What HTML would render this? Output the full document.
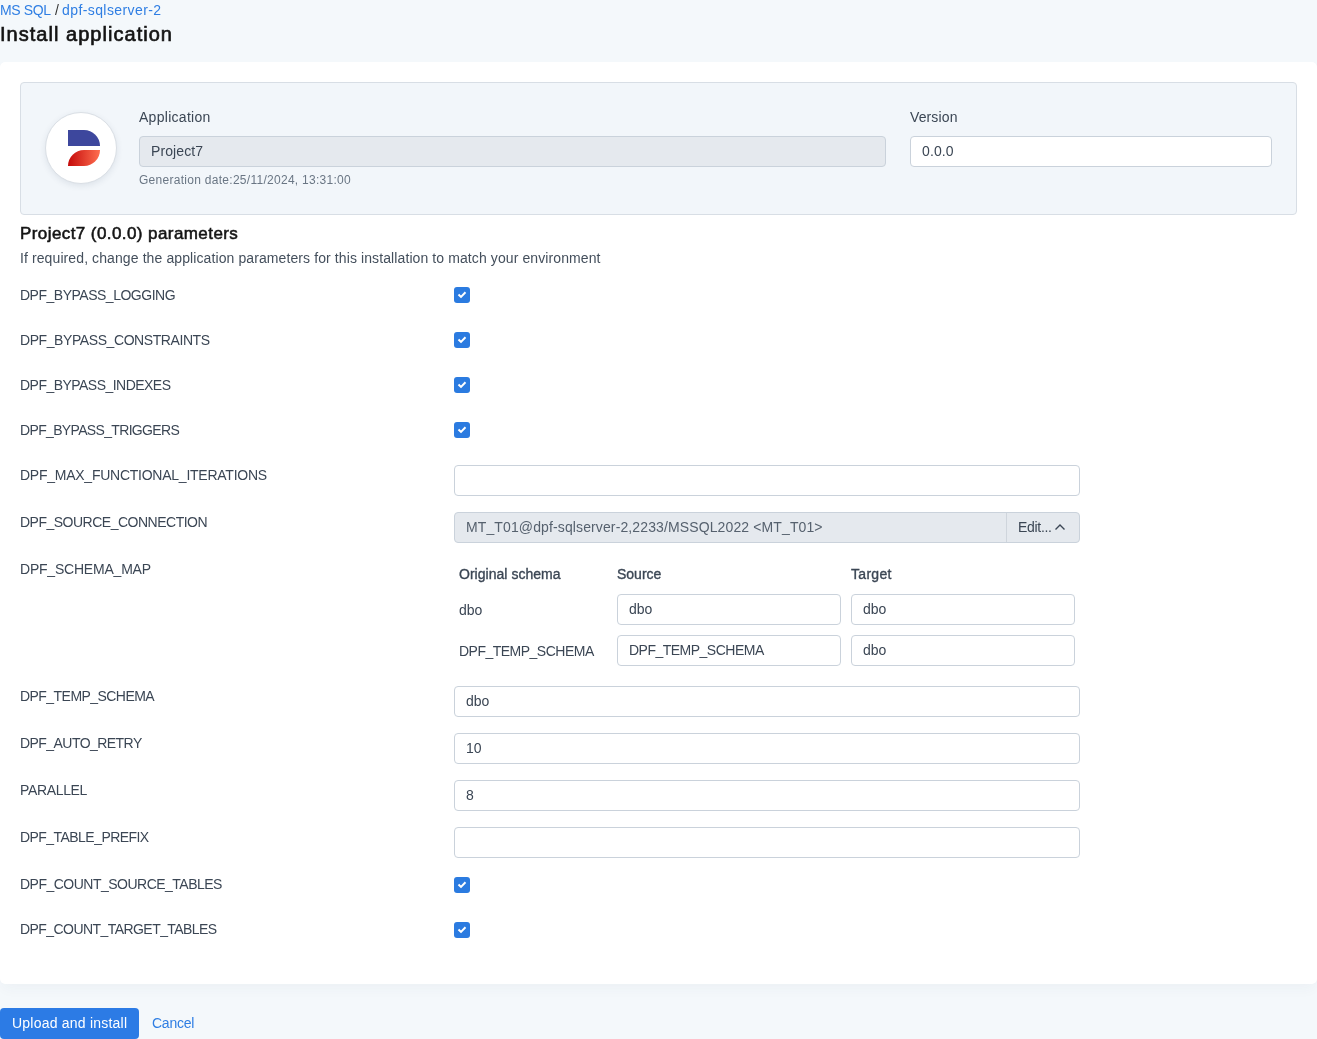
<!DOCTYPE html>
<html><head><meta charset="utf-8"><style>
*{box-sizing:border-box;margin:0;padding:0}
html,body{width:1317px;height:1039px;overflow:hidden;background:#f4f8fb}
body{font-family:"Liberation Sans",sans-serif;color:#3b4654}
#w{position:absolute;left:0;top:0;width:1317px;height:1039px;background:#f4f8fb;will-change:transform;overflow:hidden}
.a{position:absolute;white-space:nowrap;line-height:1}
.t14{font-size:14px}
.lbl{font-size:14px;color:#3b4654}
.sub{color:#444f5c}
.dtx{color:#56616e}
.head{color:#141414;-webkit-text-stroke:0.55px #141414}
.th{-webkit-text-stroke:0.35px #3b4654}
.card{position:absolute;left:0;top:62px;width:1317px;height:922px;background:#fff;border-radius:5px;box-shadow:0 0 1px rgba(40,60,90,.03),0 7px 14px -3px rgba(40,60,90,.045)}
.box{position:absolute;left:20px;top:82px;width:1277px;height:133px;background:#f2f6fa;border:1px solid #d8dee5;border-radius:4px}
.inp{position:absolute;height:31px;background:#fff;border:1px solid #cad2db;border-radius:4px}
.dis{background:#e5e9ee}
.cb{position:absolute;left:454px;width:16px;height:16px;background:#2b7be0;border-radius:3px}
.cb svg{position:absolute;left:0;top:0}
.link{color:#2f7ee3}
</style></head><body><div id="w">
<div class="a link" style="left:0;top:3px;font-size:14px;letter-spacing:-0.38px">MS SQL</div>
<div class="a" style="left:55px;top:3px;font-size:14px;color:#333">/</div>
<div class="a link" style="left:62px;top:3px;font-size:14px;letter-spacing:0.41px">dpf-sqlserver-2</div>
<div class="a head" style="left:0;top:24px;font-size:20px;-webkit-text-stroke:0.65px #141414;letter-spacing:1.03px">Install application</div>
<div class="card"></div><div class="box"></div>
<div class="a" style="left:45px;top:112px;width:72px;height:72px;border-radius:50%;background:#fff;border:1px solid #dadfe5;box-shadow:0 2px 6px rgba(40,60,90,.10)"></div>
<svg class="a" style="left:68px;top:129px" width="33" height="38" viewBox="0 0 33 38">
 <defs><linearGradient id="rg" x1="0" x2="1" y1="0" y2="0"><stop offset="0" stop-color="#c40a0a"/><stop offset="1" stop-color="#ff6f50"/></linearGradient></defs>
 <path d="M0 1 H16 A16 16 0 0 1 32 17 H0 Z" fill="#3d479d"/>
 <path d="M32 21 H16 A16 16 0 0 0 0 37 H16 A16 16 0 0 0 32 21 Z" fill="url(#rg)"/>
</svg>
<div class="a t14" style="left:139px;top:110px;letter-spacing:0.28px">Application</div>
<div class="inp dis" style="left:139px;top:136px;width:747px"></div><div class="a t14" style="left:151px;top:144px;letter-spacing:0.1px">Project7</div>
<div class="a" style="left:139px;top:174px;font-size:12px;color:#6a7684;letter-spacing:0.28px">Generation date:25/11/2024, 13:31:00</div>
<div class="a t14" style="left:910px;top:110px;letter-spacing:0.12px">Version</div>
<div class="inp " style="left:910px;top:136px;width:362px"></div><div class="a t14" style="left:922px;top:144px;letter-spacing:0.12px">0.0.0</div>
<div class="a head" style="left:20px;top:225px;font-size:17px;letter-spacing:0.42px">Project7 (0.0.0) parameters</div>
<div class="a t14 sub" style="left:20px;top:251px;letter-spacing:0.1px">If required, change the application parameters for this installation to match your environment</div>
<div class="a lbl" style="left:20px;top:288px;letter-spacing:-0.49px">DPF_BYPASS_LOGGING</div>
<div class="cb" style="top:287px"><svg width="16" height="16"><path d="M4.5 7.5 L7 9.9 L11.5 5.3" stroke="#fff" stroke-width="2" fill="none"/></svg></div>
<div class="a lbl" style="left:20px;top:333px;letter-spacing:-0.42px">DPF_BYPASS_CONSTRAINTS</div>
<div class="cb" style="top:332px"><svg width="16" height="16"><path d="M4.5 7.5 L7 9.9 L11.5 5.3" stroke="#fff" stroke-width="2" fill="none"/></svg></div>
<div class="a lbl" style="left:20px;top:378px;letter-spacing:-0.53px">DPF_BYPASS_INDEXES</div>
<div class="cb" style="top:377px"><svg width="16" height="16"><path d="M4.5 7.5 L7 9.9 L11.5 5.3" stroke="#fff" stroke-width="2" fill="none"/></svg></div>
<div class="a lbl" style="left:20px;top:423px;letter-spacing:-0.66px">DPF_BYPASS_TRIGGERS</div>
<div class="cb" style="top:422px"><svg width="16" height="16"><path d="M4.5 7.5 L7 9.9 L11.5 5.3" stroke="#fff" stroke-width="2" fill="none"/></svg></div>
<div class="a lbl" style="left:20px;top:468px;letter-spacing:-0.25px">DPF_MAX_FUNCTIONAL_ITERATIONS</div>
<div class="inp " style="left:454px;top:465px;width:626px"></div>
<div class="a lbl" style="left:20px;top:515px;letter-spacing:-0.5px">DPF_SOURCE_CONNECTION</div>
<div class="inp dis" style="left:454px;top:512px;width:626px"></div><div class="a t14 dtx" style="left:466px;top:520px;letter-spacing:0.12px">MT_T01@dpf-sqlserver-2,2233/MSSQL2022 &lt;MT_T01&gt;</div>
<div class="a" style="left:1006px;top:513px;width:1px;height:29px;background:#cfd5dc"></div>
<div class="a t14" style="left:1018px;top:520px;letter-spacing:-0.3px">Edit...</div>
<svg class="a" style="left:1054px;top:522px" width="12" height="10"><path d="M1.5 7.5 L6 3 L10.5 7.5" stroke="#3b4654" stroke-width="1.4" fill="none"/></svg>
<div class="a lbl" style="left:20px;top:562px;letter-spacing:-0.21px">DPF_SCHEMA_MAP</div>
<div class="a t14 th" style="left:459px;top:567px;letter-spacing:0.03px">Original schema</div>
<div class="a t14 th" style="left:617px;top:567px;letter-spacing:0px">Source</div>
<div class="a t14 th" style="left:851px;top:567px;letter-spacing:0.3px">Target</div>
<div class="a t14" style="left:459px;top:603px">dbo</div>
<div class="inp " style="left:617px;top:594px;width:224px"></div><div class="a t14" style="left:629px;top:602px;letter-spacing:0px">dbo</div>
<div class="inp " style="left:851px;top:594px;width:224px"></div><div class="a t14" style="left:863px;top:602px;letter-spacing:0px">dbo</div>
<div class="a lbl" style="left:459px;top:644px;letter-spacing:-0.51px">DPF_TEMP_SCHEMA</div>
<div class="inp " style="left:617px;top:635px;width:224px"></div><div class="a lbl" style="left:629px;top:643px;letter-spacing:-0.51px">DPF_TEMP_SCHEMA</div>
<div class="inp " style="left:851px;top:635px;width:224px"></div><div class="a t14" style="left:863px;top:643px;letter-spacing:0px">dbo</div>
<div class="a lbl" style="left:20px;top:689px;letter-spacing:-0.55px">DPF_TEMP_SCHEMA</div>
<div class="inp " style="left:454px;top:686px;width:626px"></div><div class="a t14" style="left:466px;top:694px;letter-spacing:0px">dbo</div>
<div class="a lbl" style="left:20px;top:736px;letter-spacing:-0.55px">DPF_AUTO_RETRY</div>
<div class="inp " style="left:454px;top:733px;width:626px"></div><div class="a t14" style="left:466px;top:741px;letter-spacing:0px">10</div>
<div class="a lbl" style="left:20px;top:783px;letter-spacing:-0.34px">PARALLEL</div>
<div class="inp " style="left:454px;top:780px;width:626px"></div><div class="a t14" style="left:466px;top:788px;letter-spacing:0px">8</div>
<div class="a lbl" style="left:20px;top:830px;letter-spacing:-0.55px">DPF_TABLE_PREFIX</div>
<div class="inp " style="left:454px;top:827px;width:626px"></div>
<div class="a lbl" style="left:20px;top:877px;letter-spacing:-0.51px">DPF_COUNT_SOURCE_TABLES</div>
<div class="cb" style="top:877px"><svg width="16" height="16"><path d="M4.5 7.5 L7 9.9 L11.5 5.3" stroke="#fff" stroke-width="2" fill="none"/></svg></div>
<div class="a lbl" style="left:20px;top:922px;letter-spacing:-0.56px">DPF_COUNT_TARGET_TABLES</div>
<div class="cb" style="top:922px"><svg width="16" height="16"><path d="M4.5 7.5 L7 9.9 L11.5 5.3" stroke="#fff" stroke-width="2" fill="none"/></svg></div>
<div class="a" style="left:0;top:1008px;width:139px;height:31px;background:#2c7be5;border-radius:4px"></div>
<div class="a t14" style="left:12px;top:1016px;color:#fff;letter-spacing:0.22px">Upload and install</div>
<div class="a t14 link" style="left:152px;top:1016px;letter-spacing:-0.25px">Cancel</div>
</div></body></html>
